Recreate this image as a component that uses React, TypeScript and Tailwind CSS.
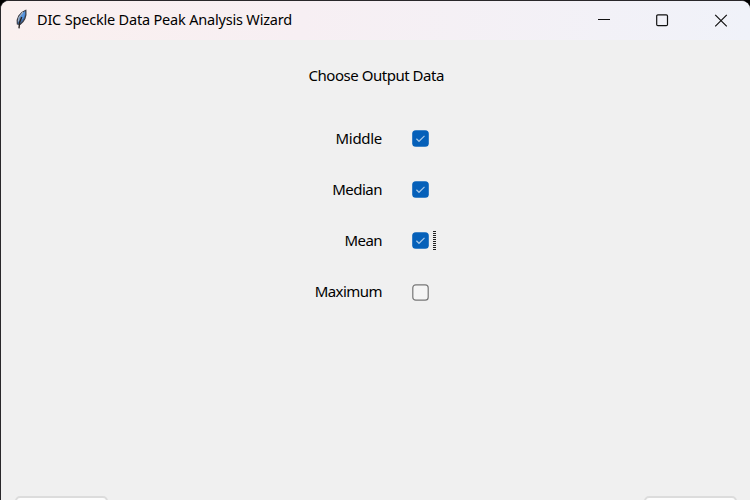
import React from "react";

type Option = { label: string; checked: boolean; focused?: boolean; text: string };

const options: Option[] = [
  { label: "Middle", checked: true, text: "tracking-[-0.3px]" },
  { label: "Median", checked: true, text: "tracking-[-0.5px]" },
  { label: "Mean", checked: true, focused: true, text: "tracking-[-0.55px]" },
  { label: "Maximum", checked: false, text: "tracking-[-0.55px]" },
];

function Feather() {
  return (
    <svg width="14" height="22" viewBox="0 0 14 22" className="mb-[2px] shrink-0">
      <path d="M3.3 15C2.3 9.5 5.5 3.5 11.9 1.2C12.6 6.5 10.6 12 6 15.5Z" fill="#426da6" stroke="#3c3d46" strokeWidth="1.1" />
      <path d="M5.8 12C5.7 7.5 8.2 4 11 2.2C11.2 7 9.5 10.5 5.8 12Z" fill="#5795df" />
      <path d="M9 3.2L5 8.4L4.4 12.5" fill="none" stroke="#a9b5c4" strokeWidth="1.2" />
      <path d="M7.8 8L5.6 13.5L5 19.4" fill="none" stroke="#292323" strokeWidth="1.4" />
    </svg>
  );
}

function Checkbox({ checked }: { checked: boolean }) {
  return (
    <svg width="17" height="17" viewBox="0 0 17 17" className="shrink-0">
      {checked ? (
        <>
          <rect x="0.2" y="0.2" width="16.6" height="16.6" rx="3.6" fill="#0560b9" />
          <path d="M4.4 8.8L7 11.3L12.5 5.9" fill="none" stroke="#a6c7e8" strokeWidth="1.2" />
        </>
      ) : (
        <rect x="0.8" y="0.8" width="15.4" height="15.4" rx="3" fill="#f5f5f5" stroke="#777777" strokeWidth="1.2" />
      )}
    </svg>
  );
}

export default function App() {
  return (
    <div className="h-[500px] w-[750px] overflow-hidden bg-black font-['Noto_Sans',sans-serif] text-black">
      <div className="flex h-full flex-col overflow-hidden rounded-t-[9px] border-l border-t border-[#29272a] bg-[#f0f0f0]">
        <header className="flex h-[39px] shrink-0 items-center bg-linear-to-r from-[#faf0ef] via-[#f7eff3] via-40% to-[#f0f2f9] pl-[13px]">
          <Feather />
          <h1 className="mb-[4px] ml-[9px] whitespace-nowrap text-[14.5px] leading-5 tracking-[-0.19px]">DIC Speckle Data Peak Analysis Wizard</h1>
          <div className="ml-auto flex items-center pr-[22px]">
            <svg width="130" height="14" viewBox="0 0 130 14" fill="none" stroke="#111" strokeWidth="1.2">
              <path d="M0 5.5H12" />
              <rect x="58.7" y="0.9" width="10.8" height="10.8" rx="1.2" />
              <path d="M117.2 0.8L128.8 12.4M128.8 0.8L117.2 12.4" />
            </svg>
          </div>
        </header>
        <main className="flex flex-1 flex-col">
          <h2 className="mt-[25px] pl-[307.5px] text-[15px] leading-5 tracking-[-0.47px]">Choose Output Data</h2>
          <div className="mt-[28px] flex flex-col">
            {options.map((option) => (
              <label key={option.label} className="flex h-[51.2px] items-center">
                <span className={`mb-[2px] w-[381px] text-right text-[15px] leading-5 ${option.text}`}>{option.label}</span>
                <span className="ml-[30px] flex items-center gap-[4px]">
                  <Checkbox checked={option.checked} />
                  {option.focused && (
                    <svg width="4" height="20" viewBox="0 0 4 20">
                      <path d="M1.7 0V20" stroke="#222" strokeWidth="3" strokeDasharray="1 1" shapeRendering="crispEdges" />
                    </svg>
                  )}
                </span>
              </label>
            ))}
          </div>
          <footer className="mt-auto flex h-[4px] justify-between overflow-hidden pl-[14px] pr-[13px]">
            <button aria-label="Previous" className="h-8 w-[93px] rounded-[5px] border-2 border-[#dcdcdc] bg-[#fdfdfd]" />
            <button aria-label="Next" className="h-8 w-[93px] rounded-[5px] border-2 border-[#dcdcdc] bg-[#fdfdfd]" />
          </footer>
        </main>
      </div>
    </div>
  );
}
